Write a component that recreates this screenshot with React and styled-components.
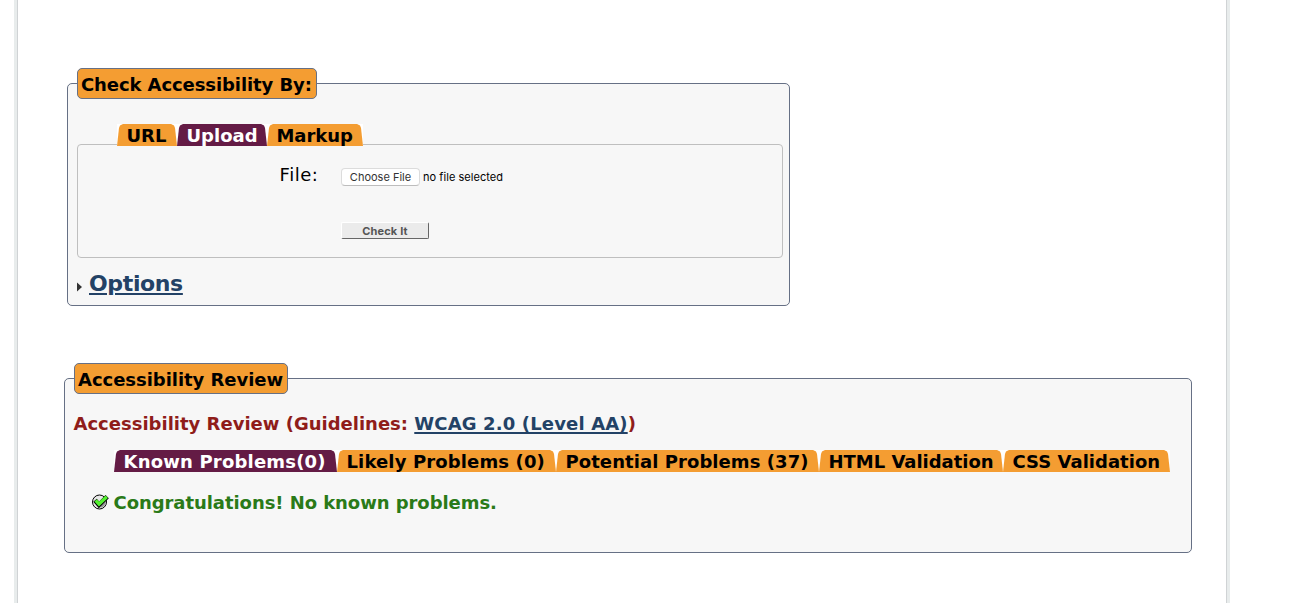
import React from "react";
import styled, { createGlobalStyle } from "styled-components";

const GlobalStyle = createGlobalStyle`
  * { box-sizing: border-box; }
  html, body { margin: 0; height: 603px; background: #fff; overflow: hidden; }
  body { font-family: Verdana, "DejaVu Sans", sans-serif; font-size: 18px; color: #000; }
`;

const Page = styled.main`
  width: 1216px;
  height: 603px;
  margin-left: 14px;
  padding: 68px 0 0 47px;
  border-style: solid;
  border-color: #e8ecec;
  border-width: 0 3px;
  box-shadow: inset 1px 0 #d0d3d5, inset -1px 0 #d0d3d5;
`;

const Group = styled.fieldset`
  width: ${(p) => p.$width}px;
  height: ${(p) => p.$height}px;
  margin: 0 0 0 ${(p) => p.$left || 0}px;
  padding: 0 6px 0 9px;
  border: 1px solid #667085;
  border-radius: 5px;
  background: #f7f7f7;
  & + & { margin-top: 57px; }
`;

const Legend = styled.legend`
  width: ${(p) => p.$width}px;
  height: 31px;
  padding: 0 0 0 3px;
  border: 1px solid #667085;
  border-radius: 5px;
  background: #f49d32;
  font-weight: bold;
  line-height: 31px;
  white-space: nowrap;
  letter-spacing: ${(p) => p.$track || 0}px;
`;

const Tabs = styled.nav`
  display: flex;
  position: relative;
  height: 22px;
  margin: ${(p) => p.$top}px 0 0 40px;
`;

const TabLabel = styled.a`
  display: block;
  position: relative;
  flex: none;
  width: ${(p) => p.$width}px;
  height: 22px;
  padding-left: 9.5px;
  background: #fff;
  color: ${(p) => (p.$active ? "#fff" : "#000")};
  font-weight: bold;
  line-height: 23px;
  white-space: nowrap;
  letter-spacing: ${(p) => p.$track || 0}px;
  &::before {
    content: "";
    position: absolute;
    inset: 0;
    background: ${(p) => (p.$active ? "#641b45" : "#f49d32")};
    clip-path: polygon(0 100%, 2px 4px, 3px 1.5px, 6px 0, calc(100% - 6px) 0, calc(100% - 3px) 1.5px, calc(100% - 2px) 4px, 100% 100%);
  }
  span { position: relative; }
`;

const Panel = styled.div`
  height: 114px;
  margin-top: -2px;
  padding: 18px 0 0 201px;
  border: 1px solid #bfbfbf;
  border-radius: 4px;
`;

const FileRow = styled.div`
  display: flex;
  align-items: center;
  height: 26px;
`;

const FileLabel = styled.label`
  width: 62px;
  margin-top: -2px;
  padding-left: 0.6px;
  line-height: 24px;
  letter-spacing: 0.5px;
`;

const ChooseButton = styled.button`
  width: 79px;
  height: 18px;
  margin: 2px 0 0 0;
  padding: 0;
  border: 1px solid #dcdcdc;
  border-bottom-color: #bdbdbd;
  border-radius: 4px;
  background: #fff;
  color: #333;
  font: 11px/16px Inter, sans-serif;
  white-space: nowrap;
`;

const FileStatus = styled.span`
  margin: 2px 0 0 3px;
  font: 11px/16px Inter, sans-serif;
  letter-spacing: 0.05px;
  white-space: nowrap;
`;

const CheckButton = styled.button`
  display: block;
  width: 88px;
  height: 17px;
  margin: 33px 0 0 62px;
  padding: 1px 0 0;
  border: 1px solid #fff;
  border-right-color: #666;
  border-bottom-color: #666;
  border-radius: 2px;
  background: #ebebeb;
  color: #555;
  font: bold 11px/15px Inter, sans-serif;
  letter-spacing: 0.15px;
`;

const Options = styled.div`
  display: flex;
  align-items: center;
  gap: 6px;
  height: 30px;
  margin-top: 11px;
  font-size: 22px;
  font-weight: bold;
  svg { margin-top: 6px; }
  a { margin-top: -2px; }
`;

const Link = styled.a`
  color: #234266;
  text-decoration: underline;
  text-decoration-thickness: 2px;
  text-underline-offset: 2px;
  letter-spacing: ${(p) => p.$track || 0}px;
`;

const Heading = styled.h3`
  margin: 17px 0 0 -0.5px;
  color: #8f1d1a;
  font-size: 18px;
  line-height: 26px;
  white-space: nowrap;
`;

const Message = styled.p`
  display: flex;
  align-items: center;
  gap: 4.5px;
  margin: 18px 0 0 18px;
  color: #2a7a18;
  font-weight: bold;
  line-height: 26px;
  white-space: nowrap;
  letter-spacing: -0.06px;
  svg { margin-top: -3px; }
`;

function Tab({ children, width, active, track }) {
  return (
    <TabLabel $width={width} $active={active} $track={track}>
      <span>{children}</span>
    </TabLabel>
  );
}

function CheckIcon() {
  return (
    <svg width="17" height="16" viewBox="0 0 17 16">
      <circle cx="7.5" cy="8" r="7" fill="#e8e8e8" stroke="#000" strokeWidth="1" />
      <path d="M8.5 14Q13.5 12.5 14 7L9 12Z" fill="#999" />
      <path d="M3 6.2 7 10.8 15.2 2.6" fill="none" stroke="#000" strokeWidth="4.6" />
      <path d="M3.6 6.4 7 10 14.8 2.8" fill="none" stroke="#53f02f" strokeWidth="3.4" />
    </svg>
  );
}

export default function App() {
  return (
    <>
      <GlobalStyle />
      <Page>
        <Group $width={723} $height={238} $left={3}>
          <Legend $width={240} $track={-0.09}>Check Accessibility By:</Legend>
          <Tabs $top={25}>
            <Tab width={60}>URL</Tab>
            <Tab width={90} active>Upload</Tab>
            <Tab width={96} track={-0.05}>Markup</Tab>
          </Tabs>
          <Panel>
            <FileRow>
              <FileLabel>File:</FileLabel>
              <ChooseButton>Choose File</ChooseButton>
              <FileStatus>no file selected</FileStatus>
            </FileRow>
            <CheckButton>Check It</CheckButton>
          </Panel>
          <Options>
            <svg width="6" height="10" viewBox="0 0 6 10"><path d="M0 0.5 5 5 0 9.5Z" fill="#333" /></svg>
            <Link $track={-0.36}>Options</Link>
          </Options>
        </Group>
        <Group $width={1128} $height={190}>
          <Legend $width={214} $track={-0.04}>Accessibility Review</Legend>
          <Heading>
            Accessibility Review (Guidelines: <Link $track={0.15}>WCAG 2.0 (Level AA)</Link>)
          </Heading>
          <Tabs $top={13}>
            <Tab width={223} active track={0.19}>Known Problems(0)</Tab>
            <Tab width={219} track={0.13}>Likely Problems (0)</Tab>
            <Tab width={263} track={0.07}>Potential Problems (37)</Tab>
            <Tab width={184} track={-0.02}>HTML Validation</Tab>
            <Tab width={167} track={0.02}>CSS Validation</Tab>
          </Tabs>
          <Message>
            <CheckIcon />
            <span>Congratulations! No known problems.</span>
          </Message>
        </Group>
      </Page>
    </>
  );
}
